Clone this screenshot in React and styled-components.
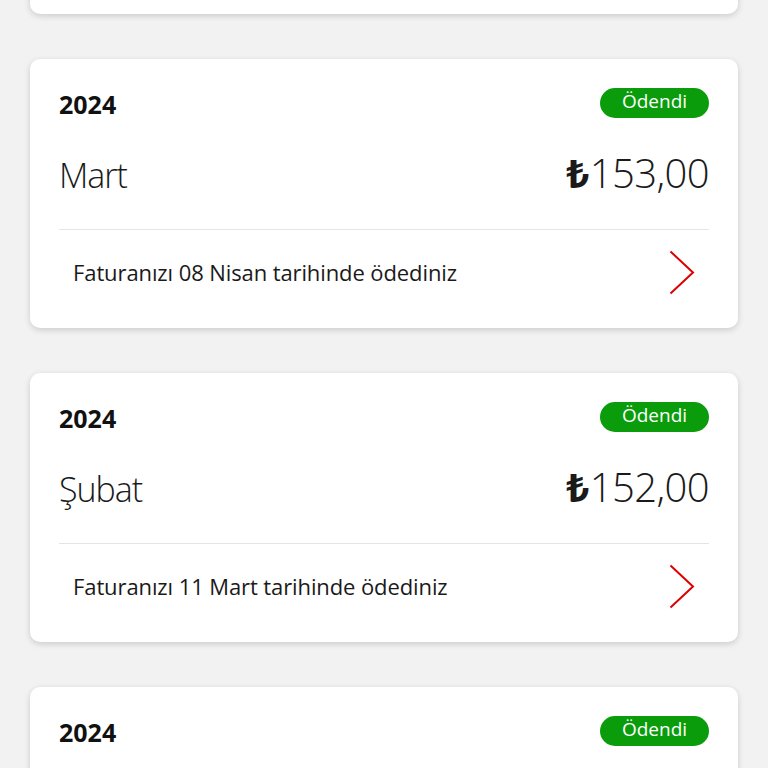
import React from 'react';
import styled, { createGlobalStyle } from 'styled-components';

const GlobalStyle = createGlobalStyle`
  html, body {
    margin: 0;
    padding: 0;
    background: #f2f2f2;
    overflow: hidden;
  }

  body {
    font-family: 'Open Sans', 'Noto Sans', sans-serif;
    color: #1a1a1a;
  }
`;

const BillList = styled.div`
  display: flex;
  flex-direction: column;
  gap: 45px;
  padding: 0 30px;
  margin-top: -255px;
`;

const Card = styled.div`
  background: #fff;
  border-radius: 10px;
  box-shadow: 0 2px 6px rgba(0, 0, 0, 0.16);
  padding: 29px 29px 14px;
  display: flex;
  flex-direction: column;
`;

const TopRow = styled.div`
  display: flex;
  justify-content: space-between;
  align-items: center;
  height: 30px;
`;

const Year = styled.div`
  font-size: 25px;
  font-weight: 700;
  line-height: 30px;
  padding-top: 1px;
  color: #111;
`;

const Badge = styled.span`
  display: inline-flex;
  align-items: center;
  justify-content: center;
  height: 30px;
  width: 109px;
  border-radius: 15px;
  background: ${(p) => (p.$paid ? '#0a9c0a' : '#e60000')};
  color: #fff;
  font-size: 19px;
  line-height: 1;
  padding-bottom: 3px;
  box-sizing: border-box;
`;

const AmountRow = styled.div`
  display: flex;
  justify-content: space-between;
  align-items: baseline;
  margin: 33px 0 34px;
  height: 44px;
`;

const Month = styled.div`
  font-size: 34px;
  font-weight: 300;
  line-height: 44px;
  color: #1a1a1a;
  letter-spacing: -1px;
`;

const Amount = styled.div`
  font-size: 40px;
  font-weight: 300;
  line-height: 44px;
  color: #1a1a1a;
  letter-spacing: -0.6px;

  & .currency {
    font-weight: 700;
    margin-right: 1px;
  }
`;

const DetailRow = styled.div`
  display: flex;
  align-items: center;
  justify-content: space-between;
  height: 84px;
  border-top: 1px solid #e4e4e4;
  padding: 0 14px 0 14px;
`;

const DetailText = styled.span`
  font-size: 22px;
  line-height: 1;
  color: #1a1a1a;
  letter-spacing: -0.1px;
`;

const Chevron = () => (
  <svg width="26" height="45" viewBox="0 0 26 45" fill="none">
    <path d="M1.5 1.5 L24 22.5 L1.5 43.5" stroke="#dc0000" strokeWidth="2" />
  </svg>
);

const bills = [
  { year: 2024, month: 'Nisan', amount: '154,00', text: 'Faturanızı 09 Mayıs tarihinde ödediniz' },
  { year: 2024, month: 'Mart', amount: '153,00', text: 'Faturanızı 08 Nisan tarihinde ödediniz' },
  { year: 2024, month: 'Şubat', amount: '152,00', text: 'Faturanızı 11 Mart tarihinde ödediniz' },
  { year: 2024, month: 'Ocak', amount: '151,00', text: 'Faturanızı 08 Şubat tarihinde ödediniz' },
];

const BillCard = ({ bill }) => (
  <Card>
    <TopRow>
      <Year>{bill.year}</Year>
      <Badge $paid>Ödendi</Badge>
    </TopRow>
    <AmountRow>
      <Month>{bill.month}</Month>
      <Amount>
        <span className="currency">₺</span>
        {bill.amount}
      </Amount>
    </AmountRow>
    <DetailRow>
      <DetailText>{bill.text}</DetailText>
      <Chevron />
    </DetailRow>
  </Card>
);

const App = () => (
  <>
    <GlobalStyle />
    <BillList>
      {bills.map((bill) => (
        <BillCard key={bill.month} bill={bill} />
      ))}
    </BillList>
  </>
);

export default App;
